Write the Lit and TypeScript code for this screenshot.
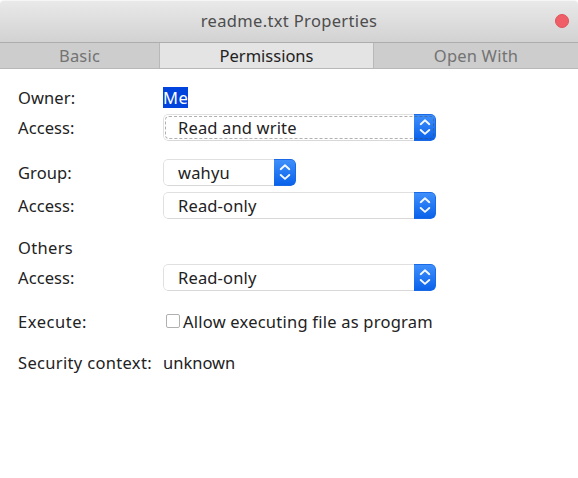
import { LitElement, html, css, svg } from "lit";
import { customElement, property } from "lit/decorators.js";

@customElement("combo-box")
class ComboBox extends LitElement {
  @property() value = "";
  @property({ type: Boolean, reflect: true }) focused = false;

  static styles = css`
    :host {
      display: flex;
      position: relative;
      box-sizing: border-box;
      width: 273px;
      height: 27px;
      border-radius: 5px;
      background: #fff;
      overflow: hidden;
    }
    .value {
      flex: 1;
      box-sizing: border-box;
      border: 1px solid #e0e0e0;
      border-bottom-color: #d8d8d8;
      border-right: 0;
      border-radius: 5px 0 0 5px;
      padding-left: 14px;
      line-height: 25px;
      white-space: nowrap;
    }
    .arrows {
      width: 22px;
      box-sizing: border-box;
      border: 1px solid #1a6ae6;
      border-left: 0;
      border-radius: 0 5px 5px 0;
      background: linear-gradient(#3f8ffb, #0a62ea);
    }
    svg {
      display: block;
      width: 22px;
      height: 25px;
    }
    .focus {
      position: absolute;
      inset: 2px;
      border: 1px dashed rgba(70, 70, 70, 0.42);
      border-radius: 4px;
    }
  `;

  render() {
    return html`
      <div class="value">${this.value}</div>
      <div class="arrows">
        <svg viewBox="0 0 22 25" fill="none" stroke="#f4f8ff" stroke-width="1.9" stroke-linecap="round" stroke-linejoin="round">
          ${svg`<path d="M6.7 9.2 11 5.3 15.3 9.2M6.7 15 11 18.9 15.3 15" />`}
        </svg>
      </div>
      ${this.focused ? html`<div class="focus"></div>` : null}
    `;
  }
}

@customElement("app-root")
class AppRoot extends LitElement {
  static styles = css`
    :host {
      display: flex;
      flex-direction: column;
      box-sizing: border-box;
      width: 578px;
      height: 478px;
      background: #fff;
      color: #222;
      font: 16.5px/22px "Noto Sans", sans-serif;
      overflow: hidden;
    }
    .titlebar {
      display: grid;
      grid-template-columns: 1fr auto 1fr;
      align-items: center;
      box-sizing: border-box;
      height: 43px;
      padding: 0 9px 2px;
      border-top: 1px solid #f6f6f6;
      border-bottom: 1px solid #adadad;
      border-radius: 4px 4px 0 0;
      background: linear-gradient(#e9e9e9, #d2d2d2);
      color: #4d4d4d;
    }
    .title {
      grid-column: 2;
      letter-spacing: 0.34px;
    }
    .close {
      justify-self: end;
      box-sizing: border-box;
      width: 14px;
      height: 14px;
      border-radius: 50%;
      border: 1px solid #e0525a;
      background: #f05f67;
    }
    .tabs {
      display: grid;
      grid-template-columns: 159px 215px 204px;
      box-sizing: border-box;
      height: 26px;
      border-bottom: 1px solid #b8b8b8;
      background: #cdcdcd;
      color: #737373;
      line-height: 25px;
      letter-spacing: 0.2px;
      text-align: center;
    }
    .tab.active {
      box-sizing: border-box;
      border: solid #b8b8b8;
      border-width: 0 1px;
      background: #e4e4e4;
      color: #222;
      letter-spacing: 0;
    }
    .form {
      display: grid;
      grid-template-columns: 145px 1fr;
      grid-template-rows: 21px 6px 27px 18px 27px 6px 27px 18px 22px 5px 27px 20px 22px 19px 22px;
      align-items: center;
      padding: 18px 18px 0;
      white-space: nowrap;
    }
    .label {
      grid-column: 1;
      letter-spacing: 0.1px;
    }
    .label.loose {
      letter-spacing: 0.33px;
    }
    .label.looser {
      letter-spacing: 0.55px;
    }
    .field {
      grid-column: 2;
      letter-spacing: 0.16px;
    }
    .field.plain {
      letter-spacing: 0;
    }
    .gap {
      grid-column: 1 / -1;
    }
    .field.selected {
      justify-self: start;
      background: #0044dd;
      color: #fff;
      line-height: 21px;
      letter-spacing: 0.5px;
    }
    .short {
      width: 133px;
    }
    .check {
      display: flex;
      align-items: center;
      gap: 3px;
      padding-left: 3px;
      letter-spacing: 0.23px;
    }
    .box {
      box-sizing: border-box;
      width: 14px;
      height: 14px;
      margin-bottom: 2px;
      border: 1px solid #b0b0b0;
      border-radius: 2px;
      background: #fff;
    }
  `;

  render() {
    const gap = html`<span class="gap"></span>`;
    return html`
      <header class="titlebar">
        <span class="title">readme.txt Properties</span>
        <span class="close"></span>
      </header>
      <nav class="tabs">
        <span class="tab">Basic</span>
        <span class="tab active">Permissions</span>
        <span class="tab">Open With</span>
      </nav>
      <main class="form">
        <span class="label">Owner:</span>
        <span class="field selected">Me</span>
        ${gap}
        <span class="label">Access:</span>
        <combo-box class="field" value="Read and write" focused></combo-box>
        ${gap}
        <span class="label">Group:</span>
        <combo-box class="field short" value="wahyu"></combo-box>
        ${gap}
        <span class="label">Access:</span>
        <combo-box class="field" value="Read-only"></combo-box>
        ${gap}
        <span class="label loose">Others</span><span></span>
        ${gap}
        <span class="label">Access:</span>
        <combo-box class="field" value="Read-only"></combo-box>
        ${gap}
        <span class="label looser">Execute:</span>
        <label class="field check"><span class="box"></span>Allow executing file as program</label>
        ${gap}
        <span class="label loose">Security context:</span>
        <span class="field plain">unknown</span>
      </main>
    `;
  }
}
